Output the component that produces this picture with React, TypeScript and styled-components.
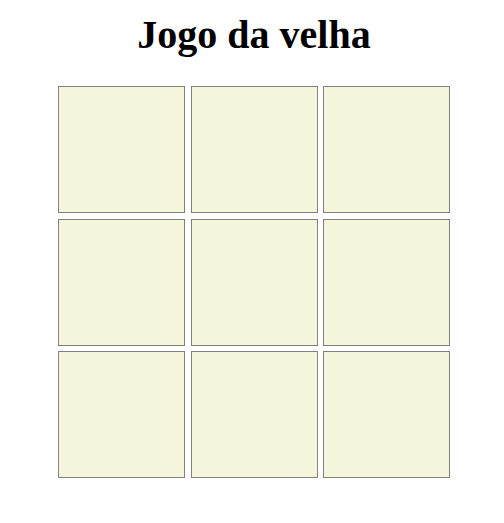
import React from 'react';
import styled, { createGlobalStyle } from 'styled-components';

const GlobalStyle = createGlobalStyle`
    body {
        margin: 0;
        background: #ffffff;
        font-family: "Liberation Serif", "Times New Roman", serif;
    }
`;

const Page = styled.div`
    display: flex;
    flex-direction: column;
    align-items: center;
    padding-left: 4px;
`;

const Title = styled.h1`
    margin: 11px 0 28px;
    font-size: 40px;
    font-weight: bold;
    color: #000;
`;

const Board = styled.div`
    display: grid;
    grid-template-columns: repeat(3, 127px);
    grid-template-rows: repeat(3, 127px);
    column-gap: 5.5px;
    row-gap: 5.5px;
`;

const Cell = styled.div`
    box-sizing: border-box;
    background-color: #f5f5dc;
    border: 1px solid #808080;
    cursor: pointer;
`;

function App() {
    const cells = Array.from({ length: 9 }, (_, i) => i);
    return (
        <>
            <GlobalStyle />
            <Page>
                <Title>Jogo da velha</Title>
                <Board>
                    {cells.map(i => (
                        <Cell key={i} />
                    ))}
                </Board>
            </Page>
        </>
    );
}

export default App;
